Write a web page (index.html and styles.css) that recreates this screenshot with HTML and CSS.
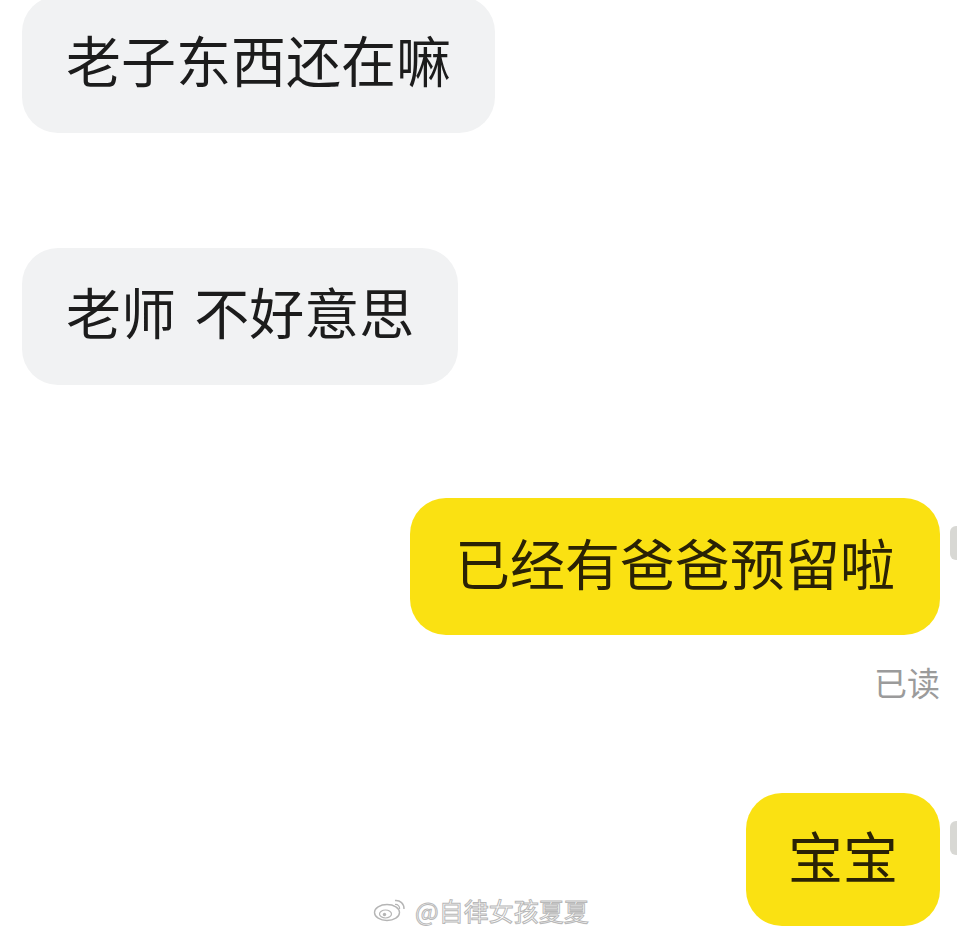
FILE: index.html
```html
<!DOCTYPE html>
<html lang="zh-CN">
<head>
    <meta charset="UTF-8">
    <meta name="viewport" content="width=device-width, initial-scale=1.0">
    <title>聊天</title>
    <link rel="stylesheet" href="styles.css">
</head>
<body>
    <div class="chat">
        <div class="row left first">
            <div class="bubble gray">老子东西还在嘛</div>
        </div>
        <div class="row left second">
            <div class="bubble gray">老师<span class="space"> </span>不好意思</div>
        </div>
        <div class="row right third">
            <div class="bubble yellow">已经有爸爸预留啦</div>
            <div class="avatar"></div>
        </div>
        <div class="read">已读</div>
        <div class="row right fourth">
            <div class="bubble yellow">宝宝</div>
            <div class="avatar"></div>
        </div>
    </div>

    <div class="watermark">
        <svg width="34" height="24" viewBox="0 0 34 24">
            <ellipse cx="14" cy="14.5" rx="12.5" ry="8" fill="#fff" stroke="#b5b5b5" stroke-width="1.4"/>
            <ellipse cx="12.5" cy="16" rx="6" ry="4" fill="none" stroke="#b5b5b5" stroke-width="1.2"/>
            <circle cx="11.5" cy="16.5" r="1.7" fill="#b5b5b5"/>
            <path d="M22 2.5a8 8 0 0 1 9 8.5" fill="none" stroke="#b5b5b5" stroke-width="1.4"/>
            <path d="M22 6.5a4 4 0 0 1 4.6 4.5" fill="none" stroke="#b5b5b5" stroke-width="1.2"/>
        </svg>
        <span>@自律女孩夏夏</span>
    </div>
</body>
</html>
```

FILE: styles.css
```css
body {
    margin: 0;
    background: #fff;
    font-family: "Noto Sans CJK SC", "Noto Sans", sans-serif;
    overflow: hidden;
}
.chat {
    display: flex;
    flex-direction: column;
    padding: 0 0 0 22px;
}
.row {
    display: flex;
}
.row.right {
    justify-content: flex-end;
    gap: 10px;
}
.first {
    margin-top: -4px;
}
.second {
    margin-top: 115px;
}
.third {
    margin-top: 113px;
}
.fourth {
    margin-top: 92px;
}
.bubble {
    font-size: 55px;
    line-height: 55px;
    padding: 35px 44px 47px;
    border-radius: 36px;
    white-space: nowrap;
}
.space {
    margin-right: 6px;
}
.gray {
    background: #f1f2f3;
    color: #1c1c1c;
}
.yellow {
    background: #fae112;
    color: #2a2205;
    padding: 36px 45px 46px;
}
.fourth .yellow {
    padding: 34px 42px 44px;
}
.avatar {
    width: 7px;
    height: 34px;
    margin-top: 28px;
    background: #d8d8d4;
    border-radius: 6px 0 0 6px;
}
.read {
    align-self: flex-end;
    margin-right: 17px;
    margin-top: 28px;
    font-size: 33px;
    line-height: 38px;
    color: #9b9b9b;
}
.watermark {
    position: absolute;
    left: 373px;
    top: 896px;
    display: flex;
    align-items: center;
    gap: 8px;
}
.watermark span {
    font-size: 25px;
    line-height: 28px;
    color: #fff;
    -webkit-text-stroke: 1px #b8b8b8;
}
```
